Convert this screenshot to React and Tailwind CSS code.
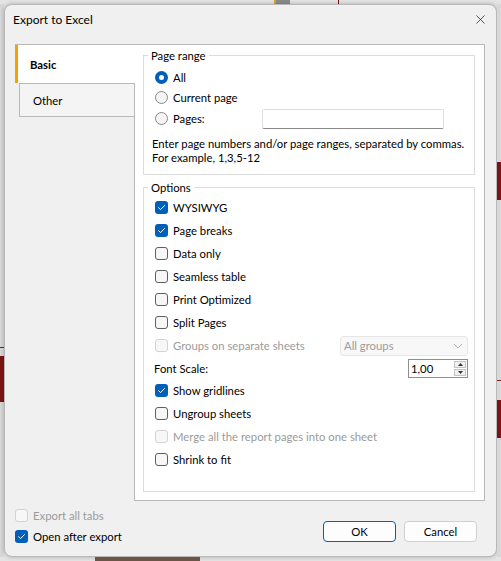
import { X } from "lucide-react";

function Check({ checked, disabled }) {
  if (checked) {
    return (
      <span className="flex h-[13px] w-[13px] shrink-0 items-center justify-center rounded-[3px] bg-[#005fb8]">
        <svg width="13" height="13" viewBox="0 0 13 13" fill="none">
          <path d="M3.6 6.7 L5.6 8.6 L9.5 4.5" stroke="#fff" strokeWidth="1" strokeLinecap="round" strokeLinejoin="round" />
        </svg>
      </span>
    );
  }
  return (
    <span
      className={
        disabled
          ? "h-[13px] w-[13px] shrink-0 rounded-[3px] border border-[#d3d3d3] bg-[#f7f7f7]"
          : "h-[13px] w-[13px] shrink-0 rounded-[3px] border border-[#5f5f5f] bg-[#f6f6f6]"
      }
    />
  );
}

function CheckRow({ label, checked, disabled, h = "h-[23px]" }) {
  return (
    <div className={`flex ${h} items-center gap-[5px]`}>
      <Check checked={checked} disabled={disabled} />
      <span className={disabled ? "text-[#9b9b9b]" : "text-black"}>{label}</span>
    </div>
  );
}

function Radio({ checked }) {
  if (checked) {
    return (
      <span className="flex h-[13px] w-[13px] shrink-0 items-center justify-center rounded-full bg-[#005fb8]">
        <span className="h-[5px] w-[5px] rounded-full bg-white" />
      </span>
    );
  }
  return <span className="h-[13px] w-[13px] shrink-0 rounded-full border border-[#8a8a8a] bg-[#f4f4f4]" />;
}

export default function App() {
  return (
    <div
      className="flex h-[561px] w-[501px] flex-col overflow-hidden bg-[#e4e4e4] text-[11.3px] leading-[15px] text-black"
      style={{ fontFamily: 'Lato, "Liberation Sans", Arial, sans-serif' }}
    >
      {/* report behind the dialog, top edge */}
      <div className="flex h-[4px] shrink-0">
        <div className="w-[274px]" />
        <div className="w-[2px] bg-[#e0a020]" />
        <div className="w-[14px] bg-[#8c8c8c]" />
        <div className="w-[48px]" />
        <div className="w-[1px] bg-[#7a1010]" />
      </div>

      <div className="flex h-[553px] shrink-0">
        {/* left edge of report */}
        <div className="flex w-[4px] shrink-0 flex-col bg-[#d8d8d8]">
          <div className="h-[343px]" />
          <div className="h-[1px] bg-[#8b1a1a]" />
          <div className="h-[8px]" />
          <div className="h-[46px] bg-[#7d1414]" />
        </div>

        {/* dialog */}
        <div className="flex w-[493px] shrink-0 flex-col rounded-[8px] border border-[#b9b9b9] bg-[#f0f0f0] shadow-[0_0_4px_rgba(0,0,0,0.25)]">
          <div className="flex h-[39px] shrink-0 items-start justify-between pl-[8px] pr-[8px] pt-[7px]">
            <span className="text-[12px]">Export to Excel</span>
            <X size={15} strokeWidth={1.2} className="text-[#222]" />
          </div>

          <div className="flex h-[457px] shrink-0 pl-[10px] pr-[11px]">
            {/* tabs */}
            <div className="flex w-[120px] shrink-0 flex-col">
              <div className="flex h-[39px] shrink-0 items-center border-t border-[#b9b9b9] bg-white">
                <span className="h-full w-[3px] bg-[#f7a100]" />
                <span className="pl-[12px] font-bold">Basic</span>
              </div>
              <div className="ml-[4px] flex h-[34px] shrink-0 items-center border border-[#b9b9b9] bg-[#f4f4f4] pl-[13px]">
                Other
              </div>
              <div className="flex-1 border-r border-[#b9b9b9]" />
            </div>

            {/* panel */}
            <div className="flex w-[350px] shrink-0 flex-col border-y border-r border-[#b9b9b9] bg-white pl-[8px] pr-[9px]">
              <fieldset className="mt-[3px] border border-[#dcdcdc] pb-[9px]">
                <legend className="ml-[4px] px-[3px]">Page range</legend>
                <div className="flex flex-col pl-[11px] pt-[4px]">
                  <div className="flex h-[20px] items-center gap-[5px]">
                    <Radio checked />
                    <span>All</span>
                  </div>
                  <div className="flex h-[21px] items-center gap-[5px]">
                    <Radio />
                    <span>Current page</span>
                  </div>
                  <div className="flex h-[21px] items-center">
                    <div className="flex w-[107px] items-center gap-[5px]">
                      <Radio />
                      <span>Pages:</span>
                    </div>
                    <div className="h-[20px] w-[182px] rounded-[2px] border border-[#dedede] border-b-[#8a8a8a] bg-white" />
                  </div>
                </div>
                <div className="mt-[8px] whitespace-nowrap pl-[8px] leading-[14px]">
                  <div>Enter page numbers and/or page ranges, separated by commas.</div>
                  <div>For example, 1,3,5-12</div>
                </div>
              </fieldset>

              <fieldset className="mt-[5px] flex-1 border border-[#dcdcdc]">
                <legend className="ml-[4px] px-[3px]">Options</legend>
                <div className="flex flex-col pl-[11px] pr-[6px] pt-[1px]">
                  <CheckRow label="WYSIWYG" checked />
                  <CheckRow label="Page breaks" checked />
                  <CheckRow label="Data only" />
                  <CheckRow label="Seamless table" />
                  <CheckRow label="Print Optimized" />
                  <CheckRow label="Split Pages" />
                  <div className="flex h-[23px] items-center justify-between">
                    <div className="flex items-center gap-[5px]">
                      <Check disabled />
                      <span className="text-[#9b9b9b]">Groups on separate sheets</span>
                    </div>
                    <div className="flex h-[20px] w-[128px] items-center justify-between rounded-[3px] border border-[#e6e6e6] bg-[#f8f8f8] pl-[3px] pr-[4px] text-[#9b9b9b]">
                      <span>All groups</span>
                      <svg width="10" height="6" viewBox="0 0 10 6" fill="none">
                        <path d="M1 1 L5 5 L9 1" stroke="#b0b0b0" strokeWidth="1" />
                      </svg>
                    </div>
                  </div>
                  <div className="-ml-[1px] flex h-[22px] items-center justify-between">
                    <span>Font Scale:</span>
                    <div className="flex h-[19px] w-[60px] items-center border border-[#8f8f8f] bg-white pl-[2px] pr-[1px]">
                      <span className="flex-1">1,00</span>
                      <div className="flex h-[15px] w-[12px] flex-col gap-[1px]">
                        <div className="flex flex-1 items-center justify-center border border-[#c4c4c4] bg-[#f0f0f0]">
                          <svg width="5" height="3" viewBox="0 0 5 3">
                            <path d="M0 3 L2.5 0 L5 3 Z" fill="#333" />
                          </svg>
                        </div>
                        <div className="flex flex-1 items-center justify-center border border-[#c4c4c4] bg-[#f0f0f0]">
                          <svg width="5" height="3" viewBox="0 0 5 3">
                            <path d="M0 0 L2.5 3 L5 0 Z" fill="#333" />
                          </svg>
                        </div>
                      </div>
                    </div>
                  </div>
                  <CheckRow label="Show gridlines" checked />
                  <CheckRow label="Ungroup sheets" />
                  <CheckRow label="Merge all the report pages into one sheet" disabled />
                  <CheckRow label="Shrink to fit" />
                </div>
              </fieldset>
              <div className="h-[8px] shrink-0" />
            </div>
          </div>

          {/* footer */}
          <div className="flex flex-1 items-end justify-between pb-[9px] pl-[10px] pr-[19px] pt-[4px]">
            <div className="flex flex-col">
              <CheckRow label="Export all tabs" disabled h="h-[21px]" />
              <CheckRow label="Open after export" checked h="h-[21px]" />
            </div>
            <div className="mb-[5px] flex gap-[8px]">
              <button className="flex h-[21px] w-[73px] items-center justify-center rounded-[4px] border border-[#005fb8] bg-[#fdfdfd]">
                OK
              </button>
              <button className="flex h-[21px] w-[73px] items-center justify-center rounded-[4px] border border-[#d0d0d0] bg-[#fdfdfd]">
                Cancel
              </button>
            </div>
          </div>
        </div>

        {/* right edge of report */}
        <div className="flex w-[4px] shrink-0 flex-col bg-[#d8d8d8]">
          <div className="h-[158px]" />
          <div className="h-[38px] bg-[#7d1414]" />
          <div className="h-[180px]" />
          <div className="h-[1px] bg-[#8b1a1a]" />
          <div className="h-[19px]" />
          <div className="h-[38px] bg-[#7d1414]" />
        </div>
      </div>

      <div className="flex h-[4px] shrink-0">
        <div className="w-[95px]" />
        <div className="w-[105px] bg-[#6b5548]" />
      </div>
    </div>
  );
}
